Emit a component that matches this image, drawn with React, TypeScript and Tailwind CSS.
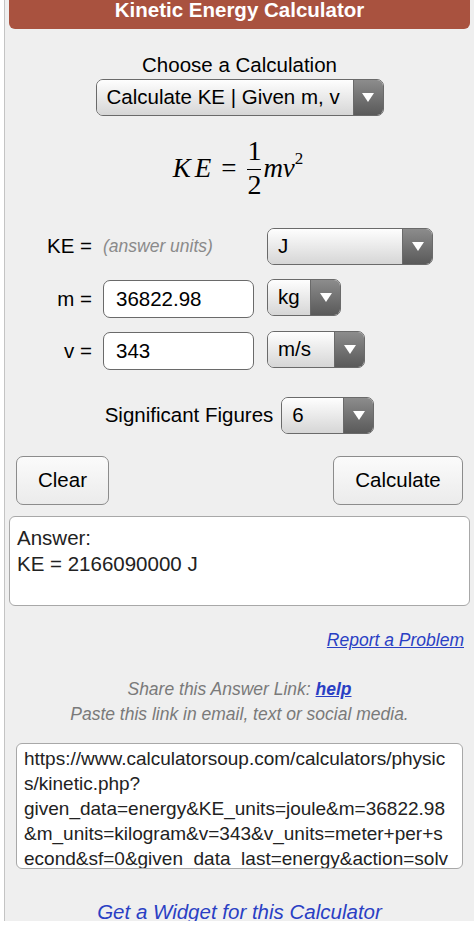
import type { ReactNode } from "react";

function Arrow() {
  return (
    <svg width="12" height="9" viewBox="0 0 12 9">
      <path d="M0 0h12L6 9z" fill="#fff" />
    </svg>
  );
}

function Select({ value, className }: { value: string; className: string }) {
  return (
    <div className={`flex h-[37px] overflow-hidden rounded-[7px] border border-[#6a6a6a] ${className}`}>
      <div className="flex flex-1 items-center bg-linear-to-b from-[#fefefe] to-[#d6d6d6] pl-[10px] text-[20.5px] text-black">
        {value}
      </div>
      <div className="flex w-[30px] items-center justify-center border-l border-[#6a6a6a] bg-linear-to-b from-[#8c8c8c] to-[#5a5a5a]">
        <Arrow />
      </div>
    </div>
  );
}

function Input({ value }: { value: string }) {
  return (
    <div className="flex h-[38px] w-[151px] items-center rounded-[7px] border border-[#6a6a6a] bg-white pl-[12px] text-[20.5px] text-black">
      {value}
    </div>
  );
}

function Label({ children }: { children: ReactNode }) {
  return <div className="flex h-[38px] w-[83px] items-center justify-end text-[20.5px] text-black">{children}</div>;
}

const LINK_LINES = [
  "https://www.calculatorsoup.com/calculators/physic",
  "s/kinetic.php?",
  "given_data=energy&KE_units=joule&m=36822.98",
  "&m_units=kilogram&v=343&v_units=meter+per+s",
  "econd&sf=0&given_data_last=energy&action=solv",
];

export default function App() {
  return (
    <div className="h-[926px] bg-white font-['Liberation_Sans',Arial,sans-serif]">
      <div className="ml-[4px] h-[921px] overflow-hidden border-l border-[#c4c4c4] bg-[#efefef] px-[4px]">
        <div className="h-[29px] rounded-b-[6px] bg-[#a9523f] text-center text-[20.5px] font-bold leading-[20px] text-white">
          Kinetic Energy Calculator
        </div>

        <div className="mt-[24px] text-center text-[20.5px] leading-[24px] text-black">Choose a Calculation</div>
        <div className="mt-[2px] flex justify-center">
          <Select value="Calculate KE | Given m, v" className="w-[288px]" />
        </div>

        {/* KE = 1/2 m v^2 */}
        <div className="mt-[22px] flex h-[60px] items-center justify-center pr-[3px] font-['Liberation_Serif','Times_New_Roman',serif] text-[27px] leading-none text-black">
          <span className="italic">K</span>
          <span className="ml-[4px] italic">E</span>
          <span className="ml-[10px] mr-[11px]">=</span>
          <span className="inline-flex flex-col items-center text-[28px]">
            <span className="pb-[3px] leading-[30px]">1</span>
            <span className="h-[1px] w-[14px] bg-black" />
            <span className="leading-[30px]">2</span>
          </span>
          <span className="ml-[2px] italic">mv</span>
          <span className="mb-[20px] text-[17px]">2</span>
        </div>

        <div className="mt-[30px] flex h-[37px] items-center">
          <div className="w-[83px] text-right text-[20.5px] text-black">KE =</div>
          <div className="ml-[11px] w-[151px] text-[17.5px] italic text-[#8a8a8a]">(answer units)</div>
          <Select value="J" className="ml-[13px] w-[166px]" />
        </div>

        <div className="mt-[15px] flex h-[38px] items-start">
          <Label>m =</Label>
          <div className="ml-[11px]">
            <Input value="36822.98" />
          </div>
          <Select value="kg" className="-mt-[1px] ml-[13px] w-[74px]" />
        </div>

        <div className="mt-[14px] flex h-[38px] items-start">
          <Label>v =</Label>
          <div className="ml-[11px]">
            <Input value="343" />
          </div>
          <Select value="m/s" className="-mt-[1px] ml-[13px] w-[98px]" />
        </div>

        <div className="mt-[27px] flex items-center justify-center">
          <span className="text-[20.5px] text-black">Significant Figures</span>
          <Select value="6" className="ml-[8px] w-[93px]" />
        </div>

        <div className="mt-[22px] flex justify-between px-[7px]">
          <button className="h-[49px] w-[93px] rounded-[7px] border border-[#8c8c8c] bg-linear-to-b from-[#fbfbfb] to-[#ebebeb] text-[20.5px] text-black">
            Clear
          </button>
          <button className="h-[49px] w-[130px] rounded-[7px] border border-[#8c8c8c] bg-linear-to-b from-[#fbfbfb] to-[#ebebeb] text-[20.5px] text-black">
            Calculate
          </button>
        </div>

        <div className="mt-[11px] h-[90px] rounded-[6px] border border-[#a8a8a8] bg-white pl-[7px] pt-[8px] text-[20.5px] leading-[26px] text-[#222]">
          <div>Answer:</div>
          <div>KE = 2166090000 J</div>
        </div>

        <div className="mt-[24px] pr-[6px] text-right text-[17.5px] leading-[20px] italic">
          <a className="text-[#2a3fc4] underline">Report a Problem</a>
        </div>

        <div className="mt-[27px] text-center text-[17.5px] leading-[25px] italic text-[#7a7a7a]">
          <div>
            Share this Answer Link: <a className="font-bold text-[#2a3fc4] underline">help</a>
          </div>
          <div>Paste this link in email, text or social media.</div>
        </div>

        <div className="mx-[7px] mt-[16px] h-[126px] overflow-hidden rounded-[6px] border border-[#a8a8a8] bg-white pl-[7px] pt-[2px] text-[19px] leading-[25px] text-[#222]">
          {LINK_LINES.map((l) => (
            <div key={l} className="whitespace-nowrap">
              {l}
            </div>
          ))}
        </div>

        <div className="mt-[31px] text-center text-[20.5px] leading-[24px] italic text-[#2a3fc4]">
          Get a Widget for this Calculator
        </div>
      </div>
    </div>
  );
}
